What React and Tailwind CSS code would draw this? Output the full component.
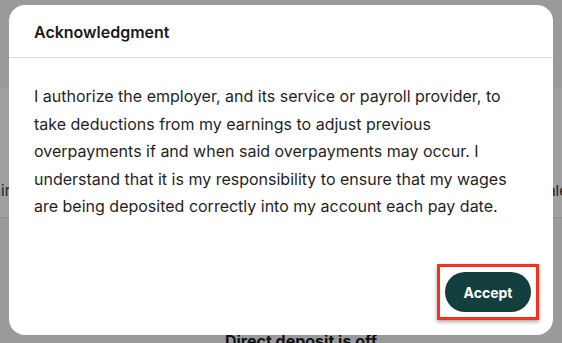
export default function App() {
  return (
    <div className="relative w-[562px] h-[343px] overflow-hidden bg-[#9a9a9a] font-['Inter','Liberation_Sans',sans-serif]">
      {/* dimmed page behind the overlay */}
      <div className="pt-[88px]">
        <div className="h-[130px] bg-[#a0a0a0] border-b border-[#8e8e8e] flex items-end justify-between pb-[16px]">
          <span className="text-[15px] leading-[20px] text-[#1d1d1d] -ml-[17px]">Pair</span>
          <span className="text-[15px] leading-[20px] text-[#1d1d1d] -mr-[6px]">Sale</span>
        </div>
        <div className="pt-[113px] text-center text-[16px] leading-[20px] font-bold text-[#111] pl-[40px]">Direct deposit is off</div>
      </div>

      {/* modal */}
      <div className="absolute left-[9px] top-[5px] w-[544px] h-[330px] bg-white rounded-[16px] flex flex-col">
        <div className="h-[53px] flex items-center px-[25px] border-b border-[#dedede]">
          <h2 className="text-[16px] font-semibold text-[#1a1a1a] pt-[1px]">Acknowledgment</h2>
        </div>
        <p className="px-[25px] pt-[25px] text-[16px] leading-[27.5px] text-[#1f1f1f]">
          I authorize the employer, and its service or payroll provider, to take deductions from my earnings to adjust previous overpayments if and when said overpayments may occur. I understand that it is my responsibility to ensure that my wages are being deposited correctly into my account each pay date.
        </p>
        <div className="mt-auto flex justify-end pr-[14px] pb-[15px]">
          <div className="border-[3px] border-[#f5321f] shadow-[0_2px_4px_rgba(0,0,0,0.35)] px-[5px] py-[5px]">
            <button className="w-[86px] h-[40px] rounded-full bg-[#133f3e] text-white text-[14px] font-bold">
              Accept
            </button>
          </div>
        </div>
      </div>
    </div>
  );
}
